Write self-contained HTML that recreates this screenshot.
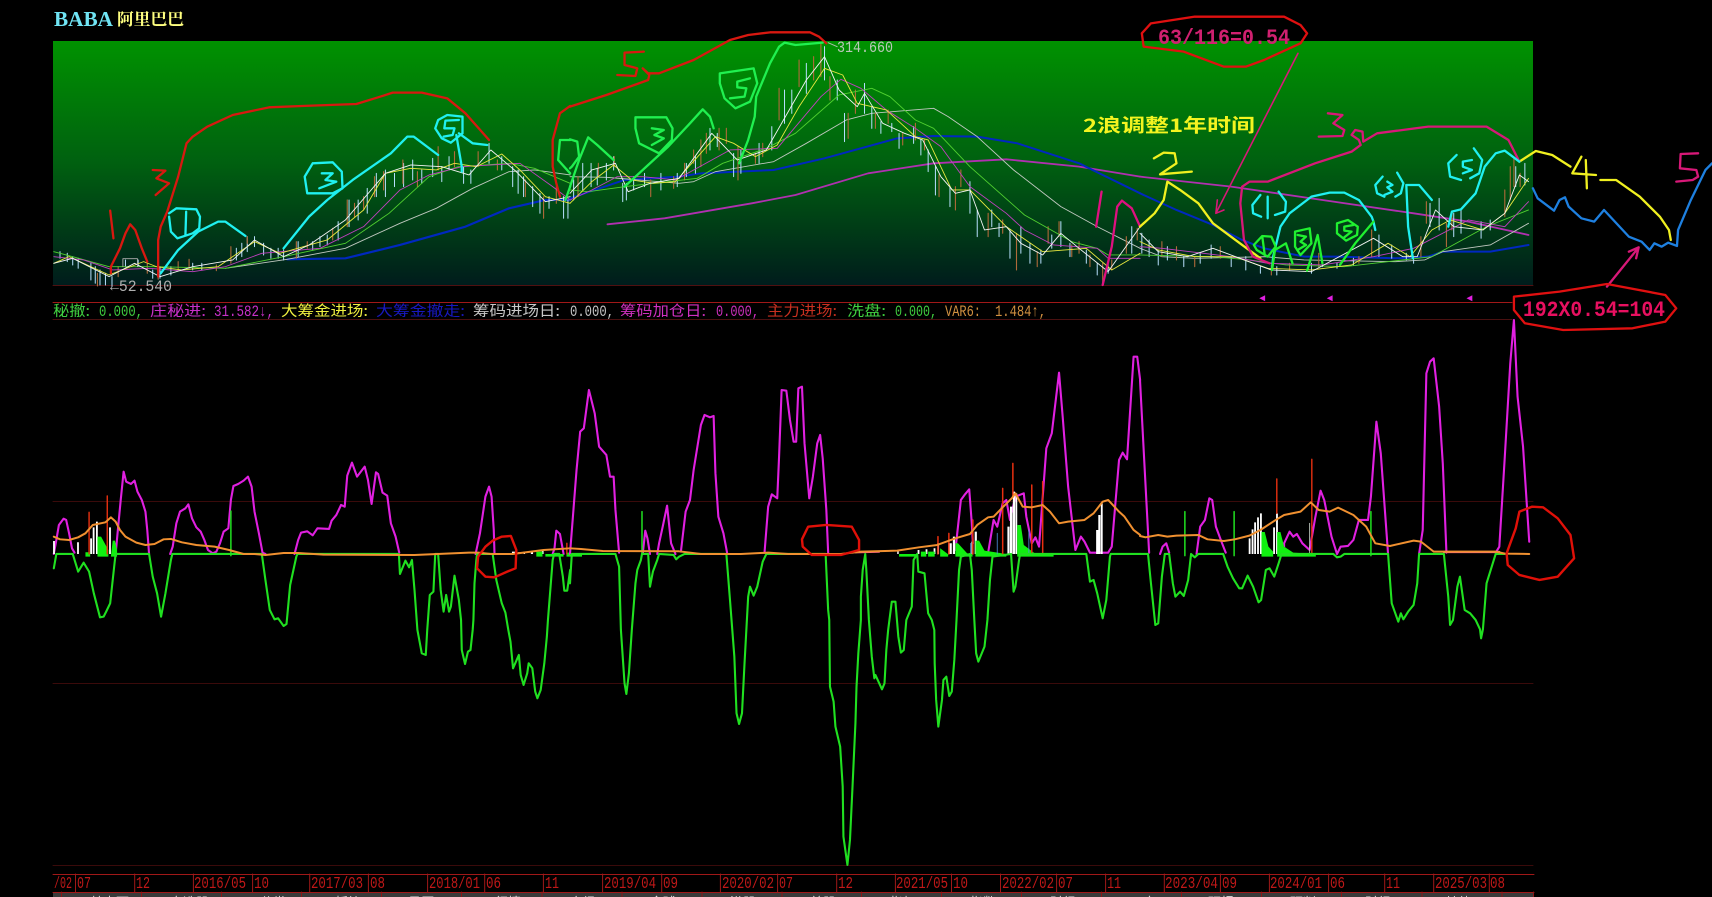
<!DOCTYPE html>
<html><head><meta charset="utf-8"><title>BABA</title>
<style>
html,body{margin:0;padding:0;background:#000;width:1712px;height:897px;overflow:hidden}
svg{display:block;position:absolute;left:0;top:0}
path{fill:none;vector-effect:non-scaling-stroke;stroke-linejoin:round;stroke-linecap:round}
path.f{stroke:none}
.r text{font-family:"Liberation Mono","Noto Sans CJK SC",monospace;font-size:16px}
.r text.c{font-family:"WenQuanYi Zen Hei","Noto Sans CJK SC",sans-serif;font-size:14.5px}
.a text{font-family:"Liberation Mono",monospace;font-size:17px;fill:#c01818}
.t text{font-family:"Noto Sans CJK SC",sans-serif;font-size:13px;fill:#ddd}
</style></head><body>
<svg width="1712" height="897" viewBox="0 0 1712 897" xmlns="http://www.w3.org/2000/svg">
<defs><linearGradient id="g" x1="0" y1="0" x2="0" y2="1"><stop offset="0" stop-color="#009200"/><stop offset=".5" stop-color="#006010"/><stop offset="1" stop-color="#001c1c"/></linearGradient></defs>
<rect x="53" y="41" width="1480" height="244.5" fill="url(#g)"/>
<path d="M53,285.5H1533" stroke="#501010"/>
<path d="M53,302.5H1512" stroke="#a01818"/>
<path d="M53,319.5H1512" stroke="#4a1010"/>
<path d="M53,501.5H1533M53,683.5H1533M53,865.5H1533" stroke="#3a0a0a"/>

<text x="54" y="26" font-family="Liberation Serif,serif" font-weight="bold" font-size="21" fill="#70e4f4" textLength="59" lengthAdjust="spacingAndGlyphs">BABA</text>
<text x="117" y="25" font-family="Noto Serif CJK SC,Noto Sans CJK SC,serif" font-weight="bold" font-size="16.5" fill="#ffff80" textLength="67" lengthAdjust="spacingAndGlyphs">阿里巴巴</text>

<!-- upper chart: left segment -->
<g transform="scale(.3636 .3333)" stroke-width=".9">
<path stroke="#0028c0" stroke-width="2.2" d="M790,778 950,775 1100,735 1280,680 1400,625 1500,600 1568,600"/>
<path stroke="#c0c8c0" d="M620,805 790,778 950,745 1100,670 1200,625 1300,565 1400,515 1470,510 1568,525"/>
<path stroke="#b8e0ff" stroke-width="1" d="M165,755V775M185,760V785M200,770V795M215,775V805M250,790V840M262,800V850M275,810V855M290,820V855M308,830V860M345,780V800M380,780V800M420,810V835M440,800V835M470,800V825M530,790V810M555,790V810M650,745V780M665,730V770M680,710V755M700,710V740M725,730V765M745,745V775M765,745V775M780,750V780M820,725V770M860,725V750M880,710V740M900,705V735M930,665V720M960,600V680M985,600V660M1010,565V640M1035,520V590M1060,510V590M1085,520V560M1110,490V560M1135,480V540M1160,510V550M1190,475V530M1215,500V545M1235,470V510M1275,500V550M1295,510V550M1345,430V490M1380,470V510M1410,500V560M1425,510V580M1440,530V590M1465,560V620M1485,580V640M1510,590V625M1550,590V655M1562,600V655"/>
<path stroke="#b06a3a" stroke-width="1.1" d="M268,820V858M325,800V830M405,790V820M435,815V838M490,785V810M520,778V805M595,795V812M635,740V790M680,710V730M815,725V775M845,725V745M915,685V720M955,600V680M975,610V650M1000,590V630M1030,530V590M1055,515V570M1108,480V550M1148,515V560M1205,440V510M1250,455V500M1315,455V500M1368,480V510M1445,540V590M1495,590V655M1530,560V610"/>
<path stroke="#50d030" d="M148,755 200,770 300,800 430,800 620,805 780,770 950,730 1070,640 1180,530 1260,500 1400,490 1470,505 1568,550"/>
<path stroke="#c040c0" d="M148,770 230,780 310,810 410,805 530,815 620,800 720,760 880,745 1000,680 1100,570 1180,525 1270,500 1430,490 1520,560 1568,600"/>
<path stroke="#e8e840" d="M148,790 190,770 300,825 395,785 430,800 500,810 600,800 700,725 770,760 900,720 1000,630 1060,520 1130,505 1200,510 1250,490 1310,500 1380,462 1430,510 1500,590 1568,610"/>
<path stroke="#f4f4f4" d="M148,790 200,775 300,830 370,790 440,830 530,800 640,780 700,720 780,770 850,735 950,660 1060,520 1130,495 1215,500 1290,525 1350,450 1420,515 1500,605 1568,590"/>
<path stroke="#b0b0b0" d="M338,800V776H378V800"/>
<g stroke="#d81810" stroke-width="2.3">
<path d="M303,632 312,715"/>
<path d="M305,820 305,800 330,745 345,700 358,673 372,690 390,745 405,785"/>
<path d="M435,830 435,720 442,680 460,635 490,530 513,430 530,410 570,380 640,345 740,322 830,318 980,312 1040,292 1080,278 1160,278 1230,295 1280,340 1345,420"/>
<path d="M420,510 455,512 430,535 465,550 428,585"/>
<path d="M1568,318 1540,340 1520,420 1520,500 1530,550 1540,590"/>
</g>
<g stroke="#20f0f0" stroke-width="2.3">
<path d="M465,640 485,625 540,628 550,650 548,685 530,700 488,715 470,695 465,650"/>
<path d="M512,635 510,705"/>
<path d="M442,820 490,750 545,695 600,665 620,665 675,708"/>
<path d="M860,490 915,487 940,515 942,565 915,580 845,580 838,530 860,490"/>
<path d="M885,520 915,520 895,540 925,545 878,565"/>
<path d="M780,745 850,650 900,600 970,540 1075,460 1120,410 1138,410 1205,465"/>
<path d="M1205,360 1230,345 1272,350 1272,400 1240,428 1215,415 1197,385Z"/>
<path d="M1262,360 1225,362 1222,385 1250,385 1245,405 1220,410"/>
<path d="M1255,405 1270,500 1270,515M1262,400 1300,430 1340,435"/>
</g>
<path stroke="#20f050" stroke-width="2.3" d="M1568,420 1540,420 1535,480 1568,520M1555,600 1568,560"/>
</g>

<!-- upper chart: middle segment -->
<g transform="translate(570 0) scale(.3636 .3333)" stroke-width=".9">
<path stroke="#b030b0" stroke-width="1.8" d="M103,673 260,655 500,610 620,585 820,520 1000,490 1200,478 1400,500 1568,530"/>
<path stroke="#0028c0" stroke-width="2" d="M0,595 150,540 300,530 360,520 560,510 700,475 900,415 1000,408 1120,410 1230,430 1400,490 1568,580"/>
<path stroke="#c0c8c0" d="M0,530 100,532 300,550 340,545 400,515 560,485 650,430 760,360 830,340 1000,325 1040,350 1120,410 1220,510 1350,620 1450,680 1568,745"/>
<path stroke="#b8e0ff" stroke-width="1" d="M10,540V600M35,490V570M58,490V560M75,505V555M100,490V540M120,470V510M145,550V605M155,550V600M175,530V570M205,520V560M250,520V570M295,520V560M320,490V530M345,470V520M385,385V450M405,400V440M450,460V530M470,450V520M520,430V490M555,380V450M590,270V370M610,270V340M650,190V280M700,140V240M715,240V300M735,240V300M755,340V425M810,250V340M830,320V385M855,365V400M885,370V395M905,400V445M945,380V430M965,420V465M985,450V515M1005,500V585M1045,560V620M1100,545V640M1120,630V710M1160,630V680M1180,670V710M1210,690V775M1240,680V760M1265,730V790M1295,750V790M1325,705V745M1350,665V740M1375,730V770M1420,750V790M1450,790V825M1480,790V820M1545,680V760"/>
<path stroke="#b06a3a" stroke-width="1.1" d="M22,530V590M78,490V530M122,470V500M222,540V590M285,530V565M315,490V540M340,450V490M360,420V500M375,400V460M410,385V450M430,385V430M462,440V540M510,460V490M530,430V470M575,265V360M630,180V260M670,170V240M690,130V230M715,230V300M765,340V415M785,270V340M840,340V385M875,330V370M915,400V435M950,370V420M975,420V450M1015,525V590M1060,560V630M1075,510V560M1150,640V710M1190,660V700M1228,700V810M1285,755V800M1315,680V730M1345,665V710M1380,735V770M1400,725V760M1430,765V800M1465,790V855M1490,780V810M1530,710V760M1560,685V720"/>
<path stroke="#50d030" d="M0,570 50,575 150,560 350,535 420,490 540,445 620,400 740,285 830,265 880,290 950,360 1000,385 1100,500 1250,645 1380,725 1450,745 1480,765 1568,765"/>
<path stroke="#c040c0" d="M0,600 60,570 130,530 200,530 290,540 440,450 570,445 690,290 745,238 800,265 870,330 950,385 1020,440 1100,560 1200,640 1250,690 1330,735 1450,745 1480,775 1568,775"/>
<path stroke="#e8e840" d="M0,610 60,545 120,495 170,540 230,550 290,545 400,410 450,430 510,470 570,435 630,320 700,205 750,225 790,310 870,330 950,410 985,420 1050,570 1100,570 1200,680 1300,755 1420,745 1490,810 1568,760"/>
<path stroke="#f4f4f4" d="M0,580 60,510 125,490 160,575 220,550 300,535 390,400 460,480 540,450 650,240 700,170 740,270 790,320 810,280 860,370 920,400 970,420 1020,530 1060,580 1100,570 1140,690 1200,680 1240,730 1300,765 1350,700 1400,745 1480,815 1568,680"/>
<path stroke="#b0c0b0" d="M710,128 735,140"/>
<g stroke="#d81810" stroke-width="2.3">
<path d="M0,320 100,285 215,240 218,225 200,205 215,220 245,220 340,180 440,120 490,105 550,97 660,97 685,110 705,130"/>
<path d="M203,155 150,158 150,195 185,205 180,228 130,225"/>
</g>
<g stroke="#20f050" stroke-width="2.3">
<path d="M0,418 20,425 25,470 5,500 0,505"/>
<path d="M0,560 25,480 50,412 75,435 120,480"/>
<path d="M180,352 265,352 282,385 280,420 245,460 190,430 180,385Z"/>
<path d="M225,385 258,390 232,405 258,415 225,435"/>
<path d="M150,560 210,500 270,440 330,370 365,328 385,350 395,385"/>
<path d="M412,220 505,205 515,250 495,305 455,325 425,295 412,250Z"/>
<path d="M495,235 460,245 460,262 485,265 480,290 440,295"/>
<path d="M465,490 490,420 508,350 512,290 550,190 575,140 590,128 620,135 695,128"/>
</g>
<path stroke="#e01080" stroke-width="2.3" d="M1462,575 1447,680M1465,855 1490,740 1505,620 1518,602 1545,625 1568,680"/>
</g>

<!-- upper chart: right segment -->
<g transform="translate(1140 0) scale(.3648 .3333)" stroke-width=".9">
<path stroke="#b030b0" stroke-width="1.8" d="M0,530 250,560 500,600 750,640 900,665 1065,705"/>
<path stroke="#0028c0" stroke-width="2" d="M0,580 100,630 200,675 280,720 340,745 450,770 540,770 700,775 790,770 830,755 960,755 1065,735"/>
<path stroke="#c0c8c0" d="M0,745 60,770 150,775 340,770 450,780 700,785 780,780 830,755 960,735 1065,670"/>
<path stroke="#b8e0ff" stroke-width="1" d="M5,700V760M25,720V770M50,750V795M75,740V780M120,770V800M165,760V790M195,735V775M250,770V800M290,770V810M330,800V820M375,800V825M470,790V820M500,785V800M540,790V805M585,775V795M655,705V770M690,735V775M730,760V780M750,770V790M795,610V680M820,595V690M860,640V710M880,630V700M935,665V715M960,660V690M1055,490V555M1030,500V560"/>
<path stroke="#b06a3a" stroke-width="1.1" d="M60,725V770M100,740V780M150,770V800M220,740V775M360,795V825M410,790V810M490,760V800M600,770V790M635,690V770M770,710V770M785,605V670M840,670V740M855,640V690M1000,570V650M1015,500V600M1025,475V560M1042,520V560"/>
<path stroke="#50d030" d="M0,765 200,770 300,780 400,795 560,800 640,790 800,770 950,680 1065,630"/>
<path stroke="#c040c0" d="M0,740 60,745 250,770 350,790 500,795 640,770 750,745 900,660 1000,680 1065,605"/>
<path stroke="#e8e840" d="M0,725 50,750 150,770 260,770 350,805 470,810 580,795 680,730 740,770 800,690 850,660 940,690 1000,640 1065,535"/>
<path stroke="#f4f4f4" d="M0,700 50,755 130,770 200,745 360,810 470,815 640,715 720,770 760,770 810,630 860,680 940,690 1000,640 1040,525 1065,545"/>
<g stroke="#f0f020" stroke-width="2.3">
<path d="M38,475 65,458 95,460 100,490 55,523 142,515"/>
<path d="M0,680 40,640 65,600 75,545 110,570 160,610 200,670 280,735 330,775"/>
<path d="M1040,485 1085,453 1130,465 1180,500"/>
<path d="M1210,470 1185,520 1250,525M1222,480 1225,565"/>
<path d="M1262,540 1305,540 1370,590 1425,650 1450,690 1455,720"/>
</g>
<g stroke="#d81878" stroke-width="2.3">
<path stroke-width="1.6" d="M433,160 208,640M230,630 208,640 212,600"/>
<path d="M515,340 555,345 530,370 560,390 555,408 490,410"/>
<path d="M355,790 310,770 285,720 275,610 280,560 300,545 350,545 480,490 580,455 605,435 600,420 580,405 590,390 610,395 612,425 650,400 790,380 950,380 1010,420 1040,485"/>
<path d="M1530,460 1482,462 1480,505 1525,510 1530,530 1515,540 1470,545"/>
<path d="M1280,860 1365,745M1340,755 1367,742 1360,775"/>
</g>
<g stroke="#e01010" stroke-width="2.3">
<path d="M5,100 30,70 150,50 395,50 440,75 458,100 440,130 340,180 290,200 230,200 120,155 10,140Z"/>
<path d="M1025,890 1150,875 1280,852 1440,885 1470,925 1440,965 1350,985 1160,990 1055,970 1025,930Z"/>
</g>
<g stroke="#20f0f0" stroke-width="2.3">
<path d="M330,585 308,615 310,640 332,650M350,590 350,655M380,575 400,605 398,635 370,645"/>
<path d="M362,810 365,770 385,680 410,640 470,590 520,578 560,578 600,600 635,650 640,665 645,690"/>
<path d="M665,530 645,555 650,580 670,590M678,545 692,555 678,562 692,575 670,585M705,518 722,550 715,580 700,590"/>
<path d="M748,775 735,680 730,555 765,555 800,600"/>
<path d="M845,680 855,635 880,628 920,580 945,500 975,460 1000,452 1040,485"/>
<path d="M868,465 845,490 850,530 880,540M910,480 885,485 885,500 910,510 885,520M915,445 938,480 930,520 905,535"/>
</g>
<g stroke="#20f030" stroke-width="2.3">
<path d="M312,735 335,708 360,710 372,740 350,770 320,750ZM335,708 342,765"/>
<path d="M362,810 370,750 400,730 418,790"/>
<path d="M425,695 465,685 470,730 440,765 425,740ZM432,705 455,710 440,725 455,735 432,750"/>
<path d="M458,812 470,770 487,705 500,790"/>
<path d="M540,670 570,660 597,680 595,705 565,722 540,700ZM585,675 560,680 560,692 580,695 560,712"/>
<path d="M548,795 590,730 640,665"/>
</g>
<path stroke="#1e80e0" stroke-width="2.3" d="M1077,565 1090,595 1135,632 1150,600 1165,592 1175,620 1210,655 1245,665 1272,630 1340,710 1375,725 1397,750 1410,730 1430,740 1448,728 1472,738 1475,690 1510,600 1550,510 1568,490"/>
<path class="f" style="fill:#e020e0" d="M327,895 343,886V904ZM512,895 528,886V904ZM895,895 911,886V904Z"/>
</g>

<g font-family="Liberation Mono,monospace" font-size="16" fill="#b8c8b8">
<text x="837" y="52" textLength="56" lengthAdjust="spacingAndGlyphs">314.660</text>
<text x="110" y="291" textLength="62" lengthAdjust="spacingAndGlyphs" fill="#b0b0b0">←52.540</text>
</g>
<text x="1083" y="132" font-family="Noto Sans CJK SC,sans-serif" font-weight="bold" font-size="18.5" fill="#f4f420" textLength="172" lengthAdjust="spacingAndGlyphs">2浪调整1年时间</text>
<g font-family="Liberation Mono,monospace" font-weight="bold">
<text x="1158" y="44" font-size="22" fill="#d02070" textLength="132" lengthAdjust="spacingAndGlyphs">63/116=0.54</text>
<text x="1523" y="316" font-size="22" fill="#e81060" textLength="142" lengthAdjust="spacingAndGlyphs">192X0.54=104</text>
</g>

<!-- indicator text row -->
<g class="r">
<text class="c" x="53" y="316" fill="#40d040" textLength="37" lengthAdjust="spacingAndGlyphs">秘撤:</text>
<text x="99" y="316" fill="#40d040" textLength="44" lengthAdjust="spacingAndGlyphs">0.000,</text>
<text class="c" x="150" y="316" fill="#c830c8" textLength="56" lengthAdjust="spacingAndGlyphs">庄秘进:</text>
<text x="214" y="316" fill="#c830c8" textLength="60" lengthAdjust="spacingAndGlyphs">31.582↓,</text>
<text class="c" x="281" y="316" fill="#f0f040" textLength="87" lengthAdjust="spacingAndGlyphs">大筹金进场:</text>
<text class="c" x="376" y="316" fill="#1818c0" textLength="89" lengthAdjust="spacingAndGlyphs">大筹金撤走:</text>
<text class="c" x="473" y="316" fill="#c8c8c8" textLength="87" lengthAdjust="spacingAndGlyphs">筹码进场日:</text>
<text x="570" y="316" fill="#c8c8c8" textLength="44" lengthAdjust="spacingAndGlyphs">0.000,</text>
<text class="c" x="620" y="316" fill="#d030c0" textLength="86" lengthAdjust="spacingAndGlyphs">筹码加仓日:</text>
<text x="716" y="316" fill="#d030c0" textLength="43" lengthAdjust="spacingAndGlyphs">0.000,</text>
<text class="c" x="767" y="316" fill="#c83020" textLength="70" lengthAdjust="spacingAndGlyphs">主力进场:</text>
<text class="c" x="847" y="316" fill="#40d040" textLength="39" lengthAdjust="spacingAndGlyphs">洗盘:</text>
<text x="895" y="316" fill="#40d040" textLength="42" lengthAdjust="spacingAndGlyphs">0.000,</text>
<text x="945" y="316" fill="#d09040" textLength="36" lengthAdjust="spacingAndGlyphs">VAR6:</text>
<text x="995" y="316" fill="#d09040" textLength="51" lengthAdjust="spacingAndGlyphs">1.484↑,</text>
</g>

<!-- lower chart -->
<g transform="translate(0 330) scale(.3636 .3333)">
<path stroke="#e020e0" stroke-width="2.1" d="M148,672 155,630 162,585 175,566 182,570 190,610 198,655 205,668M318,672 325,590 332,510 340,425 347,455 360,462 370,452 378,485 390,510 400,545 405,600 410,672M468,672 475,650 485,580 495,545 510,535 518,523 528,565 540,592 552,605 562,630 572,660 585,670 595,665 605,640 615,605 628,595 635,510 642,468 655,462 670,452 682,440 692,470 700,545 712,610 722,668 730,672M810,672 820,630 828,608 845,604 860,616 873,595 905,597 912,572 925,555 938,525 948,530 955,437 968,398 982,440 1003,410 1012,450 1022,522 1034,427 1040,432 1052,488 1065,497 1075,580 1088,620 1098,668M1308,672 1320,610 1335,500 1345,470 1352,500 1358,600 1360,672M1520,672 1525,655 1530,602 1540,612 1548,660 1550,672"/>
<path class="f" style="fill:#fff" d="M146,633h5v39h-5zM212,637h5v35h-5zM248,625h5v47h-5zM255,592h5v80h-5zM264,575h5v97h-5zM300,592h5v80h-5zM1408,665h8v7h-8zM1425,667h6v5h-6zM1440,665h4v7h-4zM1460,663h6v9h-6zM1490,660h5v12h-5z"/>
<path class="f" style="fill:#10f010" d="M235,667h13v13h-13zM268,680V620H278L298,660V680ZM305,680L310,632H316L322,660V680ZM1475,665h17v15h-17zM1500,672h50v8h-50zM1558,668h10v12h-10z"/>
<path stroke="#e83010" stroke-width="1.4" d="M245,547V672M295,498V672M1559,640V672"/>
<path stroke="#20e020" stroke-width="1.5" d="M635,543V677"/>
<path stroke="#20e020" stroke-width="2.1" d="M148,715 155,672 200,672 215,725 230,698 245,725 258,790 275,862 285,860 292,845 303,820 315,700 318,672 410,672 420,740 432,790 443,860 455,790 470,690 474,672 720,672 730,750 742,840 755,868 765,865 780,888 788,882 798,765 815,680 818,672 1097,672 1100,732 1115,692 1125,712 1133,690 1140,780 1148,900 1160,970 1171,975 1175,900 1182,795 1192,785 1197,672 1205,672 1212,780 1220,845 1227,795 1235,845 1240,830 1250,737 1262,810 1268,870 1270,960 1279,1002 1287,965 1294,960 1300,900 1302,870 1305,760 1310,690 1312,672 1355,672 1365,750 1380,820 1390,848 1398,900 1404,935 1411,1015 1427,975 1432,1035 1440,1065 1450,1030 1454,1000 1464,1015 1472,1085 1478,1105 1487,1080 1497,1000 1504,920 1507,870 1520,690 1524,672 1538,672 1548,740 1552,782 1560,782 1568,720"/>
<path stroke="#f09030" stroke-width="2" d="M148,620 165,628 190,630 215,622 235,610 255,585 290,577 305,562 318,575 330,600 345,620 375,638 400,645 425,642 450,628 470,627 500,637 540,645 590,650 630,660 670,672 700,672 730,675 780,669 820,669 890,674 1140,675 1290,668 1315,668 1350,672 1410,672 1495,660 1568,655"/>
<path stroke="#e01008" stroke-width="2.4" d="M1355,632 1380,620 1405,618 1420,660 1418,715 1395,725 1360,742 1335,740 1312,715 1315,680 1335,650Z"/>
</g>

<g transform="translate(570 330) scale(.3636 .3333)">
<path stroke="#e020e0" stroke-width="2.1" d="M0,672 8,560 18,420 28,305 38,295 52,180 68,250 80,350 100,375 110,440 120,440 125,540 135,668M200,672 207,602 213,625 220,672M240,672 245,640 255,590 267,527 278,640 290,672M305,665 318,545 330,510 340,420 360,285 370,255 385,262 395,258 400,430 408,560 422,610 432,668M535,668 545,530 555,493 570,505 575,380 582,180 595,182 605,270 615,335 622,335 628,175 638,170 645,340 658,505 668,440 680,340 688,315 695,385 705,540 710,668M1060,660 1075,510 1085,495 1098,478 1105,580 1108,640M1150,668 1165,570 1175,590 1190,520 1200,510 1210,570 1225,500 1248,490 1255,560 1270,640 1280,622 1290,650 1310,355 1325,310 1345,128 1355,260 1370,470 1390,660 1405,620 1415,635 1430,668 1480,668 1490,650 1510,390 1520,368 1532,388 1550,80 1560,80 1568,150"/>
<path stroke="#ff6090" stroke-width="2.2" d="M785,667 850,665"/>
<path class="f" style="fill:#fff" d="M956,660h5v12h-5zM978,658h5v14h-5zM1000,655h5v17h-5zM1010,640h5v32h-5zM1040,640h10v32h-10zM1053,620h6v52h-6zM1104,635h5v37h-5zM1113,605h6v67h-6zM1203,590h6v82h-6zM1210,530h7v142h-7zM1218,485h6v187h-6zM1225,490h5v182h-5zM1447,600h7v72h-7zM1453,555h6v117h-6zM1460,520h5v152h-5zM900,660h4v12h-4z"/>
<path class="f" style="fill:#10f010" d="M0,672h33v8h-33zM905,672h48v8h-48zM965,665h15v15h-15zM985,665h18v15h-18zM1018,655l22,18v7h-22zM1060,640h7l25,30 15,3v7h-47zM1115,632h10l15,30 60,10v8h-85zM1230,585h10l8,60 30,25 52,2v8h-100z"/>
<path stroke="#e83010" stroke-width="1.5" d="M1012,620V672M1042,610V672M1108,570V672M1190,475V672M1218,400V500M1270,465V672M1300,455V672"/>
<path stroke="#5090e0" stroke-width=".8" d="M1102,640V672M1175,610V672M1262,600V672"/>
<path stroke="#20e020" stroke-width="1.5" d="M198,545V672"/>
<path stroke="#20e020" stroke-width="2.1" d="M0,760 5,672 125,672 135,710 140,900 150,1060 155,1092 162,1030 170,900 180,760 185,720 195,690 198,672 215,672 220,770 228,725 240,690 245,672 285,675 292,688 300,680 315,672 430,672 440,810 452,980 458,1150 465,1182 473,1150 480,1000 490,800 495,770 505,797 515,770 530,695 540,672 703,672 710,840 713,870 715,1070 725,1115 730,1190 743,1250 750,1370 752,1520 763,1605 770,1530 777,1370 785,1180 788,1070 793,970 800,870 800,800 805,720 812,672 815,720 822,870 830,980 837,1045 840,1035 858,1078 865,1060 870,960 875,900 885,815 895,815 903,920 910,968 918,960 925,870 940,830 945,690 955,672 958,725 975,730 985,850 995,870 1002,900 1003,1000 1007,1110 1013,1190 1023,1110 1027,1050 1035,1040 1043,1098 1050,1085 1057,990 1063,870 1070,720 1075,680 1100,672 1105,720 1112,870 1117,970 1123,995 1140,950 1148,870 1155,750 1162,680 1213,672 1220,785 1225,770 1235,690 1238,672 1420,672 1430,755 1440,750 1450,790 1465,865 1475,810 1485,680 1487,672 1568,672"/>
<path stroke="#f09030" stroke-width="2" d="M0,655 30,657 90,663 300,664 360,672 470,672 545,668 600,672 745,672 800,665 900,662 960,652 1010,645 1060,625 1100,612 1120,585 1150,562 1165,560 1190,532 1215,505 1225,490 1245,530 1270,532 1300,525 1320,545 1345,580 1370,575 1415,570 1440,550 1465,515 1480,510 1510,545 1525,560 1550,600 1568,615"/>
<path stroke="#e01008" stroke-width="2.4" d="M655,590 705,585 775,590 795,630 795,660 745,675 665,675 640,650 638,628Z"/>
</g>

<g transform="translate(1140 330) scale(.3648 .3333)">
<path stroke="#e020e0" stroke-width="2.1" d="M0,150 12,400 25,668M55,672 62,650 72,640 80,668M155,672 165,590 178,570 190,505 198,510 208,590 225,640 235,668M395,672 395,640 410,605 420,620 430,612 445,640 465,660 480,565 495,482 505,510 525,620 540,672 550,650 570,648 585,630 600,570 625,570 633,500 648,275 660,370 680,672M765,672 775,600 785,130 795,95 805,85 820,230 830,400 840,668M975,668 985,650 1000,380 1015,100 1025,-30 1035,200 1050,350 1067,635"/>
<path stroke="#ff6090" stroke-width="2.2" d="M833,666 985,666"/>
<path class="f" style="fill:#fff" d="M298,625h5v47h-5zM306,598h5v74h-5zM313,577h5v95h-5zM321,562h5v110h-5zM329,550h5v122h-5zM365,592h5v80h-5zM373,550h5v122h-5z"/>
<path stroke="#c0c8c0" stroke-width=".9" d="M465,580V672"/>
<path class="f" style="fill:#10f010" d="M333,680V606H342L352,650 365,665V680ZM376,680V606H385L395,650 420,668 482,672V680Z"/>
<path stroke="#e83010" stroke-width="1.4" d="M375,447V550M471,388V672"/>
<path stroke="#20e020" stroke-width="1.5" d="M123,545V677M258,545V677M633,545V677"/>
<path stroke="#20e020" stroke-width="2.1" d="M0,672 22,672 30,760 42,885 50,880 60,740 68,672 80,672 90,760 97,800 110,785 120,798 132,750 140,672 150,682 160,672 228,672 240,710 255,745 272,775 280,775 295,737 310,770 325,817 332,810 345,720 355,715 368,740 380,700 388,672 530,672 540,682 550,680 560,672 680,672 690,820 708,875 715,850 722,868 735,845 750,825 760,760 765,672 833,672 845,800 850,885 858,870 870,770 877,740 890,840 905,850 920,870 932,898 935,925 940,898 950,760 975,672 1000,672"/>
<path stroke="#f09030" stroke-width="2" d="M0,618 15,622 50,615 75,620 100,617 160,615 185,628 230,633 260,628 300,617 330,600 375,568 395,555 440,545 468,517 490,540 520,545 543,533 585,555 620,590 645,640 685,648 750,632 770,635 805,665 975,665 1000,671 1067,672"/>
<path stroke="#e01008" stroke-width="2.4" d="M1040,545 1075,530 1105,532 1145,565 1180,615 1190,685 1145,740 1095,750 1040,735 1008,705 1005,670 1030,595Z"/>
</g>

<!-- date axis -->
<path d="M53,874.5H1534M53,892.5H1534M75.5,874V892M134.7,874V892M193.4,874V892M252.6,874V892M309.7,874V892M368.4,874V892M427.6,874V892M484.7,874V892M543.4,874V892M602.6,874V892M661.7,874V892M720.4,874V892M777.6,874V892M836.7,874V892M895.4,874V892M951.5,874V892M1000.5,874V892M1056.6,874V892M1105.6,874V892M1164.3,874V892M1220.4,874V892M1269.4,874V892M1328.6,874V892M1384.7,874V892M1433.7,874V892M1489.3,874V892" stroke="#a01818"/>
<g class="a">
<text x="54" y="888" textLength="18" lengthAdjust="spacingAndGlyphs">/02</text>
<text x="77" y="888" textLength="14" lengthAdjust="spacingAndGlyphs">07</text>
<text x="136" y="888" textLength="14" lengthAdjust="spacingAndGlyphs">12</text>
<text x="194" y="888" textLength="52" lengthAdjust="spacingAndGlyphs">2016/05</text>
<text x="254" y="888" textLength="15" lengthAdjust="spacingAndGlyphs">10</text>
<text x="311" y="888" textLength="52" lengthAdjust="spacingAndGlyphs">2017/03</text>
<text x="370" y="888" textLength="15" lengthAdjust="spacingAndGlyphs">08</text>
<text x="429" y="888" textLength="51" lengthAdjust="spacingAndGlyphs">2018/01</text>
<text x="486" y="888" textLength="15" lengthAdjust="spacingAndGlyphs">06</text>
<text x="545" y="888" textLength="14" lengthAdjust="spacingAndGlyphs">11</text>
<text x="604" y="888" textLength="52" lengthAdjust="spacingAndGlyphs">2019/04</text>
<text x="663" y="888" textLength="15" lengthAdjust="spacingAndGlyphs">09</text>
<text x="722" y="888" textLength="52" lengthAdjust="spacingAndGlyphs">2020/02</text>
<text x="779" y="888" textLength="14" lengthAdjust="spacingAndGlyphs">07</text>
<text x="838" y="888" textLength="15" lengthAdjust="spacingAndGlyphs">12</text>
<text x="896" y="888" textLength="52" lengthAdjust="spacingAndGlyphs">2021/05</text>
<text x="953" y="888" textLength="15" lengthAdjust="spacingAndGlyphs">10</text>
<text x="1002" y="888" textLength="52" lengthAdjust="spacingAndGlyphs">2022/02</text>
<text x="1058" y="888" textLength="15" lengthAdjust="spacingAndGlyphs">07</text>
<text x="1107" y="888" textLength="14" lengthAdjust="spacingAndGlyphs">11</text>
<text x="1165" y="888" textLength="53" lengthAdjust="spacingAndGlyphs">2023/04</text>
<text x="1222" y="888" textLength="15" lengthAdjust="spacingAndGlyphs">09</text>
<text x="1270" y="888" textLength="52" lengthAdjust="spacingAndGlyphs">2024/01</text>
<text x="1330" y="888" textLength="15" lengthAdjust="spacingAndGlyphs">06</text>
<text x="1386" y="888" textLength="14" lengthAdjust="spacingAndGlyphs">11</text>
<text x="1435" y="888" textLength="52" lengthAdjust="spacingAndGlyphs">2025/03</text>
<text x="1490" y="888" textLength="15" lengthAdjust="spacingAndGlyphs">08</text>
</g>
<rect x="53" y="893" width="1481" height="4" fill="#3a3a3a"/>
<path d="M61.5,892V897M141.5,892V897M221.5,892V897M301.5,892V897M381.5,892V897M461.5,892V897M542,892V897M622,892V897M702,892V897M782,892V897M861.5,892V897M941.5,892V897M1021.5,892V897M1101.5,892V897M1181.5,892V897M1261.5,892V897M1341.5,892V897M1422,892V897M1502,892V897M1533.5,892V897" stroke="#8a1818"/>
<g class="t">
<text x="90" y="907">基本面</text><text x="170" y="907">自选股</text><text x="260" y="907">分类</text><text x="335" y="907">板块</text><text x="408" y="907">日历</text><text x="495" y="907">行情</text><text x="570" y="907">市场</text><text x="650" y="907">全球</text><text x="730" y="907">港股</text><text x="810" y="907">美股</text><text x="890" y="907">指标</text><text x="970" y="907">指数</text><text x="1050" y="907">财经</text><text x="1130" y="907">三室</text><text x="1208" y="907">研报</text><text x="1290" y="907">研判</text><text x="1365" y="907">财经</text><text x="1445" y="907">其他</text>
</g>
</svg>
</body></html>
